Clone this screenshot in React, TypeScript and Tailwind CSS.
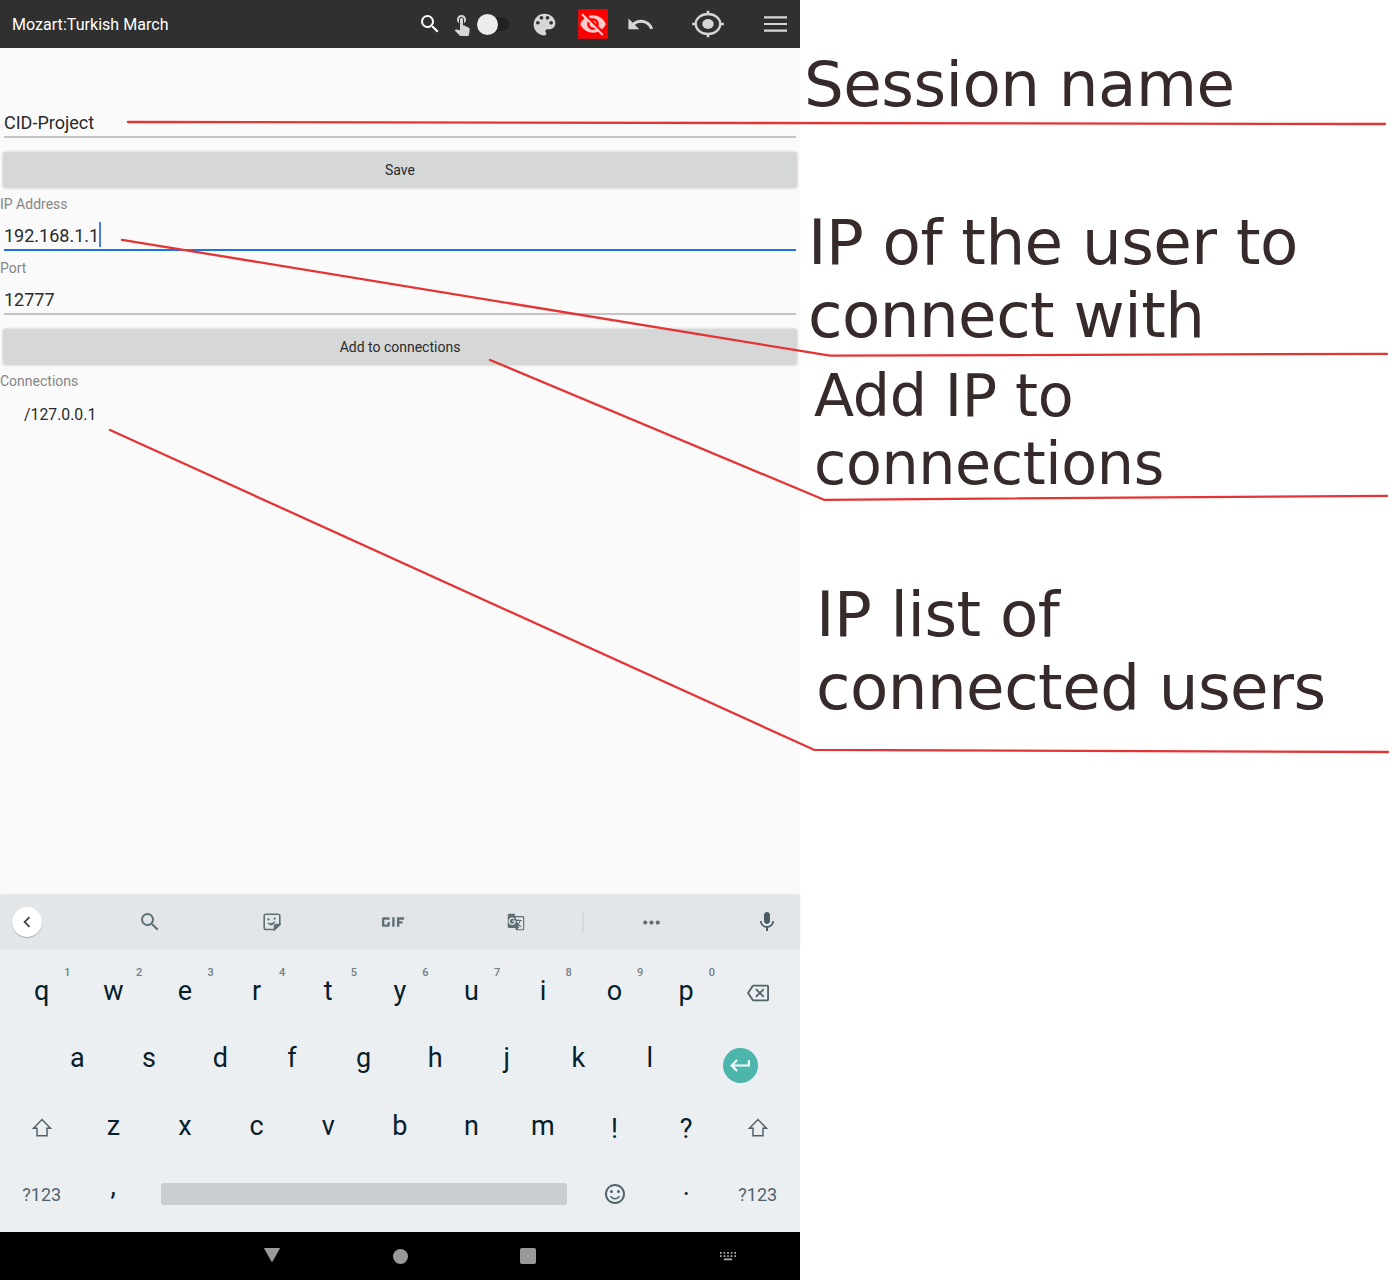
import type { ReactNode } from "react";
import {
  MdSearch,
  MdTouchApp,
  MdVisibilityOff,
  MdUndo,
  MdChevronLeft,
  MdGif,
  MdGTranslate,
  MdMoreHoriz,
  MdMic,
  MdOutlineBackspace,
  MdKeyboardReturn,
  MdOutlineSentimentSatisfiedAlt,
} from "react-icons/md";

function PaletteIcon() {
  return (
    <svg viewBox="0 0 24 24" fill="currentColor" className="ml-[21px] size-[29px]">
      <path d="M12 3c-4.970 0-9 4.030-9 9s4.030 9 9 9c.83 0 1.500-.67 1.500-1.500 0-.39-.15-.74-.39-1.010-.23-.26-.38-.61-.38-.99 0-.83.67-1.500 1.500-1.500H16c2.760 0 5-2.240 5-5 0-4.420-4.030-8-9-8zm-5.500 9c-.83 0-1.500-.67-1.500-1.500S5.670 9 6.500 9 8 9.670 8 10.500 7.330 12 6.500 12zm3-4C8.670 8 8 7.330 8 6.500S8.670 5 9.500 5s1.500.67 1.500 1.500S10.330 8 9.500 8zm5 0c-.83 0-1.500-.67-1.500-1.500S13.670 5 14.500 5s1.500.67 1.500 1.500S15.330 8 14.500 8zm3 4c-.83 0-1.500-.67-1.500-1.500S16.670 9 17.500 9s1.500.67 1.500 1.500-.67 1.500-1.500 1.500z" />
    </svg>
  );
}

function TargetIcon() {
  return (
    <svg viewBox="0 0 32 28" className="ml-[37px] h-7 w-8" fill="none" stroke="currentColor" strokeWidth="2.300">
      <ellipse cx="16" cy="14" rx="12.300" ry="10" />
      <ellipse cx="16" cy="14" rx="5.700" ry="5" fill="currentColor" stroke="none" />
      <path d="M16 .8v3.600M16 23.600v3.600M.2 14h4M27.800 14h4" strokeWidth="2.600" />
    </svg>
  );
}

function AppBar() {
  return (
    <header className="flex h-12 items-center bg-[#303030] text-[#d6d6d6]">
      <h1 className="w-[418px] pl-3 pt-px text-[16px] leading-none tracking-[0.040px] text-white">
        Mozart:Turkish March
      </h1>
      <MdSearch className="size-6 text-white" />
      <MdTouchApp className="ml-[8px] size-6" />
      <div className="ml-[3px] flex h-[14px] w-[32px] items-center rounded-full bg-[#222222]">
        <span className="size-[21px] shrink-0 rounded-full bg-[#ececec]" />
      </div>
      <PaletteIcon />
      <div className="ml-[19px] flex size-[30px] items-center justify-center border border-[#d01010] bg-[#ff0000]">
        <MdVisibilityOff className="size-[28px] shrink-0 text-[#ffcccc]" />
      </div>
      <MdUndo className="ml-[18px] size-[29px]" />
      <TargetIcon />
      <svg viewBox="0 0 23 16" className="ml-[40px] h-4 w-[23px]" fill="currentColor">
        <path d="M0 .3h23v2.200H0zM0 6.900h23v2.200H0zM0 13.500h23v2.200H0z" />
      </svg>
    </header>
  );
}

function Field({ value, active = false }: { value: string; active?: boolean }) {
  return (
    <div
      className={
        active
          ? "mx-1 flex h-[34px] items-center border-b-2 border-[#1a73e8] pt-[6px]"
          : "mx-1 flex h-[34px] items-center border-b-2 border-[#c4c4c4] pt-[6px]"
      }
    >
      <span className="text-[18px] leading-none text-[#2a2a2a]">{value}</span>
      {active && <span className="-ml-[0.500px] mb-[3px] h-[25px] w-[2px] bg-[#4a7de0]" />}
    </div>
  );
}

function WideButton({ children }: { children: ReactNode }) {
  return (
    <button className="mx-[3px] flex h-9 items-center justify-center rounded-[3px] bg-[#d6d7d7] text-[14px] text-[#2a2a2a] shadow-[0_0_3px_rgba(0,0,0,0.22)]">
      {children}
    </button>
  );
}

function Label({ children }: { children: ReactNode }) {
  return <span className="text-[14px] leading-4 text-[#868686]">{children}</span>;
}

function ConnectionForm() {
  return (
    <main className="flex h-[847px] flex-col bg-[#fafafa] pt-[56px]">
      <Field value="CID-Project" />
      <div className="mt-[14px] flex flex-col">
        <WideButton>Save</WideButton>
      </div>
      <div className="mt-2 flex flex-col gap-[5px]">
        <Label>IP Address</Label>
        <Field value="192.168.1.1" active />
      </div>
      <div className="mt-[9px] flex flex-col gap-[5px]">
        <Label>Port</Label>
        <Field value="12777" />
      </div>
      <div className="mt-[14px] flex flex-col">
        <WideButton>Add to connections</WideButton>
      </div>
      <div className="mt-2 flex flex-col">
        <Label>Connections</Label>
        <span className="mt-4 pl-6 text-[15.800px] leading-5 text-[#2a2a2a]">/127.0.0.1</span>
      </div>
    </main>
  );
}

function StickerIcon() {
  return (
    <svg viewBox="0 0 18 18" className="mr-px size-[18px]" fill="none" stroke="#5f6f76" strokeWidth="1.6">
      <path d="M11.500 16.500H3a1.800 1.800 0 0 1-1.800-1.800V3A1.800 1.800 0 0 1 3 1.200h12A1.800 1.800 0 0 1 16.800 3v8.500z" />
      <path d="M16.800 11.500h-3.300a2 2 0 0 0-2 2v3z" fill="#5f6f76" />
      <path d="M4.300 6.700l2.200-.6M10.600 5.900l2-.6" strokeWidth="1.900" />
      <path d="M5 10c2.200.9 5 .5 6.800-1.500-.2 3.600-5 5-6.800 1.500z" fill="#5f6f76" strokeWidth="0.800" />
    </svg>
  );
}

function SuggestionBar() {
  return (
    <div className="flex h-[54px] items-center bg-[#e2e6e9] text-[#5f6f76] shadow-[0_-1px_2px_rgba(0,0,0,0.08)]">
      <div className="ml-3 flex size-[30px] shrink-0 items-center justify-center rounded-full bg-white shadow-[0_1px_1px_rgba(0,0,0,0.25)]">
        <MdChevronLeft className="size-[22px] text-[#444444]" />
      </div>
      <div className="ml-[47px] grid w-[488px] shrink-0 grid-cols-4 place-items-center">
        <MdSearch className="size-[24px]" />
        <StickerIcon />
        <MdGif className="mr-[2px] size-[38px]" />
        <MdGTranslate className="size-[18px]" />
      </div>
      <span className="ml-[5px] h-[22px] w-[2px] shrink-0 bg-[#d5dadd]" />
      <MdMoreHoriz className="ml-[54.500px] size-[25px] shrink-0" />
      <MdMic className="ml-[91.500px] size-[24px] shrink-0 text-[#4a5b63]" />
    </div>
  );
}

function Key({ label, hint }: { label: string; hint?: string }) {
  return (
    <div className="relative flex flex-1 items-center justify-center text-[27px] leading-none text-[#06202b]">
      {label}
      {hint && (
        <span className="absolute right-[7px] top-[9px] text-[11px] font-medium leading-none text-[#737e83]">
          {hint}
        </span>
      )}
    </div>
  );
}

function ShiftKey() {
  return (
    <div className="flex flex-1 items-center justify-center pt-[3px]">
      <svg viewBox="0 0 20 20" className="size-5" fill="none" stroke="#52636b" strokeWidth="1.500">
        <path d="M10 1.500L1.500 10.300H5v7.500h10v-7.500h3.500z" />
      </svg>
    </div>
  );
}

function ModeKey() {
  return (
    <div className="flex flex-1 items-center justify-center pt-[2px] text-[18px] leading-none text-[#52636b]">?123</div>
  );
}

const TOP_ROW = ["q", "w", "e", "r", "t", "y", "u", "i", "o", "p"];
const HOME_ROW = ["a", "s", "d", "f", "g", "h", "j", "k", "l"];
const BOTTOM_ROW = ["z", "x", "c", "v", "b", "n", "m"];

function Keyboard() {
  return (
    <section>
      <SuggestionBar />
      <div className="h-[283px] bg-[#ebeff2] pl-[6px] pr-[6.500px] pt-[9px]">
        <div className="flex h-[66px]">
          {TOP_ROW.map((k, i) => (
            <Key key={k} label={k} hint={String((i + 1) % 10)} />
          ))}
          <div className="flex flex-1 items-center justify-center pt-[3px]">
            <MdOutlineBackspace className="size-[22px] text-[#52636b]" />
          </div>
        </div>
        <div className="flex h-[68px] pl-[35.500px]">
          <div className="flex w-[644px]">
            {HOME_ROW.map((k) => (
              <Key key={k} label={k} />
            ))}
          </div>
          <div className="flex flex-1 items-center justify-center pl-px pt-[14px]">
            <div className="flex size-[35px] items-center justify-center rounded-full bg-[#4db6ac]">
              <MdKeyboardReturn className="size-[25px] text-white" />
            </div>
          </div>
        </div>
        <div className="flex h-[68px]">
          <ShiftKey />
          {BOTTOM_ROW.map((k) => (
            <Key key={k} label={k} />
          ))}
          <div className="flex flex-1 items-center justify-center pt-[6px] text-[27px] leading-none text-[#06202b]">!</div>
          <div className="flex flex-1 items-center justify-center pt-[6px] text-[27px] leading-none text-[#06202b]">?</div>
          <ShiftKey />
        </div>
        <div className="flex h-[68px]">
          <div className="flex w-[143px]">
            <ModeKey />
            <div className="flex flex-1 items-center justify-center pb-[15px] text-[27px] leading-none text-[#06202b]">,</div>
          </div>
          <div className="flex w-[430px] items-center px-3">
            <div className="h-[22px] w-full rounded-[3px] bg-[#c9cdd0]" />
          </div>
          <div className="flex flex-1">
            <div className="flex flex-1 items-center justify-center">
              <MdOutlineSentimentSatisfiedAlt className="size-6 text-[#52636b]" />
            </div>
            <div className="flex flex-1 items-center justify-center pb-[15px] text-[27px] leading-none text-[#06202b]">.</div>
            <ModeKey />
          </div>
        </div>
      </div>
    </section>
  );
}

function KeyboardDots() {
  const cols = [0, 3.600, 7.200, 10.800, 14.400];
  return (
    <svg viewBox="0 0 16 9" className="h-[9px] w-4" fill="#b0b0b0">
      {cols.map((x) => (
        <g key={x}>
          <rect x={x} y="0" width="1.600" height="1.800" />
          <rect x={x} y="3.200" width="1.600" height="1.800" />
        </g>
      ))}
      <rect x="4" y="6.500" width="8" height="1.700" />
    </svg>
  );
}

function NavBar() {
  return (
    <nav className="flex h-12 items-center bg-black">
      <svg viewBox="0 0 16 14" className="mb-[2px] ml-[264px] h-[14px] w-4" fill="#999999">
        <path d="M.6 0h14.800q.8 0 .4.8L8.700 13.300q-.7 1-1.400 0L.2.800Q-.2 0 .6 0z" />
      </svg>
      <span className="ml-[112.500px] size-[15px] rounded-full bg-[#999999]" />
      <span className="ml-[112.500px] size-4 rounded-[2px] bg-[#999999]" />
      <div className="ml-[184px]">
        <KeyboardDots />
      </div>
    </nav>
  );
}

function Notes() {
  return (
    <aside className="flex flex-1 flex-col whitespace-nowrap pt-12 font-['DejaVu_Sans'] text-[62.670px] leading-[73px] tracking-[-0.520px] text-[#372a2a]">
      <p className="pl-[4px]">Session name</p>
      <p className="mt-[85px] pl-[8px]">
        IP of the user to
        <br />
        connect with
      </p>
      <p className="mt-[10px] pl-[14px] text-[58.670px] leading-[68.300px] tracking-[-0.350px]">
        Add IP to
        <br />
        connections
      </p>
      <p className="mt-[79px] pl-[16px]">
        IP list of
        <br />
        connected users
      </p>
    </aside>
  );
}

function Pointers() {
  return (
    <svg
      viewBox="0 0 1400 1280"
      className="pointer-events-none absolute inset-0 h-full w-full"
      fill="none"
      stroke="#e43434"
      strokeWidth="2.300"
      strokeLinecap="round"
      strokeLinejoin="round"
    >
      <path d="M128 122L1385 124" />
      <path d="M122 239.800L830 355.700L1387 353.800" />
      <path d="M490 360L824 499.800L1387 495.900" />
      <path d="M110 430L814 749.800L1388 752" />
    </svg>
  );
}

export default function App() {
  return (
    <div className="relative flex h-[1280px] w-[1400px] overflow-hidden bg-white">
      <div className="w-[800px] font-['Roboto',sans-serif]">
        <AppBar />
        <ConnectionForm />
        <Keyboard />
        <NavBar />
      </div>
      <Notes />
      <Pointers />
    </div>
  );
}
